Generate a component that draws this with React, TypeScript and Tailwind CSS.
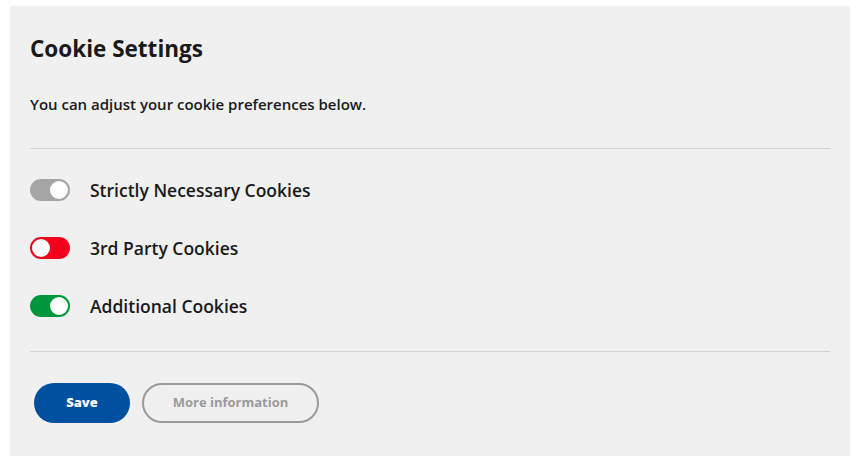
import { useState } from 'react';

type Tone = 'gray' | 'red' | 'green';

const toneClass: Record<Tone, string> = {
  gray: 'bg-[#a5a5a5] border-[#a5a5a5]',
  red: 'bg-[#f5001c] border-[#f5001c]',
  green: 'bg-[#00963c] border-[#00963c]',
};

function Toggle({ tone, on }: { tone: Tone; on: boolean }) {
  return (
    <span
      className={`flex h-[22px] w-10 shrink-0 items-center rounded-full border-2 ${toneClass[tone]} ${
        on ? 'justify-end' : 'justify-start'
      }`}
    >
      <span className="h-[18px] w-[18px] rounded-full bg-white" />
    </span>
  );
}

const rows: { label: string; tone: Tone; on: boolean }[] = [
  { label: 'Strictly Necessary Cookies', tone: 'gray', on: true },
  { label: '3rd Party Cookies', tone: 'red', on: false },
  { label: 'Additional Cookies', tone: 'green', on: true },
];

export default function App() {
  const [items] = useState(rows);

  return (
    <div className="min-h-screen bg-white pt-[6px] font-['Open_Sans',sans-serif] text-[#1a1a1a]">
      <section className="mx-[10px] h-[450px] w-[840px] bg-[#f0f0f0] px-5 pt-[29px]">
        <h1 className="text-[22.5px] font-bold leading-7">Cookie Settings</h1>
        <p className="mt-[31px] text-[15px] font-semibold leading-5">
          You can adjust your cookie preferences below.
        </p>
        <div className="mt-[34px] h-px bg-[#d2d2d2]" />
        <ul className="mt-[21px] flex flex-col gap-[18px]">
          {items.map((row) => (
            <li key={row.label} className="flex h-10 items-center gap-5">
              <Toggle tone={row.tone} on={row.on} />
              <span className="text-[17.5px] font-semibold">{row.label}</span>
            </li>
          ))}
        </ul>
        <div className="mt-[25px] h-px bg-[#d2d2d2]" />
        <div className="ml-1 mt-[31px] flex gap-3">
          <button className="h-10 w-24 rounded-full bg-[#0050a0] text-[13px] font-extrabold text-white">
            Save
          </button>
          <button className="h-10 w-[177px] rounded-full border-2 border-[#9a9a9a] text-[13px] font-bold text-[#9a9a9a]">
            More information
          </button>
        </div>
      </section>
    </div>
  );
}
